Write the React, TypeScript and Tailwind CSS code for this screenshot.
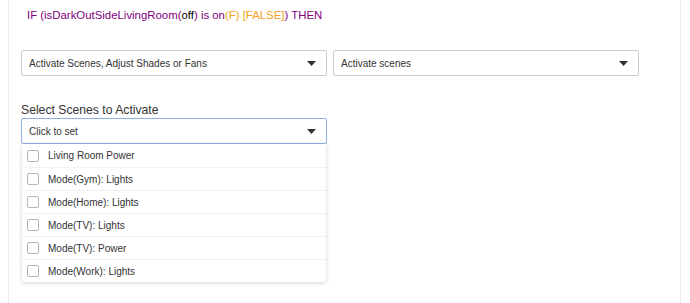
import { useState } from 'react'

const scenes = [
  'Living Room Power',
  'Mode(Gym): Lights',
  'Mode(Home): Lights',
  'Mode(TV): Lights',
  'Mode(TV): Power',
  'Mode(Work): Lights',
]

function Caret() {
  return (
    <svg width="9" height="5" viewBox="0 0 9 5" className="shrink-0">
      <path d="M0 0h9L4.5 5z" fill="#333" />
    </svg>
  )
}

function Select({ value, width, focused }: { value: string; width: string; focused?: boolean }) {
  return (
    <div
      className={`${width} h-[26px] flex items-center justify-between pl-[7px] pr-[10px] bg-white rounded-[2px] border ${
        focused ? 'border-[#8fb0e6]' : 'border-[#cccccc]'
      }`}
    >
      <span className="text-[10px] text-[#333]">{value}</span>
      <Caret />
    </div>
  )
}

export default function App() {
  const [checked, setChecked] = useState<Record<number, boolean>>({})

  return (
    <div className="w-[690px] h-[303px] bg-white overflow-hidden font-['Liberation_Sans',Arial,sans-serif]">
      <div className="ml-[8px] w-[673px] h-full border-x border-[#ececec] pl-[12px]">
        <p className="pt-[8px] pl-[6px] text-[11.4px] leading-[14px] text-[#800080]">
          IF (isDarkOutSideLivingRoom(<span className="text-black">off</span>) is on
          <span className="text-[#f5a31a]">(F) [FALSE]</span>) THEN
        </p>

        <div className="flex gap-[6px] mt-[28px]">
          <Select value="Activate Scenes, Adjust Shades or Fans" width="w-[306px]" />
          <Select value="Activate scenes" width="w-[306px]" />
        </div>

        <div className="mt-[27px] text-[12.2px] leading-[14px] text-[#333]">Select Scenes to Activate</div>
        <div className="mt-[1px] w-[306px]">
          <Select value="Click to set" width="w-[306px]" focused />
          <div className="ml-[1px] w-[304px] bg-white shadow-[0_1px_4px_rgba(0,0,0,0.18)] rounded-b-[2px]">
            {scenes.map((s, i) => (
              <label
                key={s}
                className={`flex items-center h-[23px] pl-[5px] gap-[9px] cursor-pointer ${
                  i > 0 ? 'border-t border-[#f0f0f0]' : ''
                }`}
              >
                <input
                  type="checkbox"
                  checked={!!checked[i]}
                  onChange={() => setChecked(c => ({ ...c, [i]: !c[i] }))}
                  className="appearance-none w-[12px] h-[12px] border border-[#b5b5b5] rounded-[2px] bg-white checked:bg-[#4a90e2]"
                />
                <span className="text-[10px] text-[#333]">{s}</span>
              </label>
            ))}
          </div>
        </div>
      </div>
    </div>
  )
}
